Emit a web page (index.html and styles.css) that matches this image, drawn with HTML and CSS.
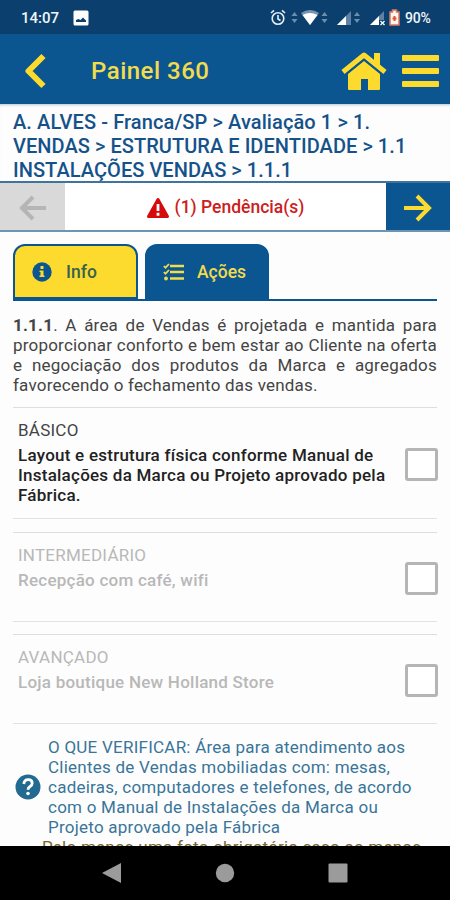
FILE: index.html
```html
<!DOCTYPE html>
<html lang="pt-BR">
<head>
<meta charset="utf-8">
<title>Painel 360</title>
<link rel="stylesheet" href="styles.css">
</head>
<body>
<div class="screen">
  <div class="status">
    <span class="clock">14:07</span>
    <svg class="photo" width="16" height="16" viewBox="0 0 16 16"><rect x=".5" y=".5" width="15" height="15" rx="1.5" fill="#fff"/><path d="M3 12v-2l2.500-1 2 1L10 7.500l3 3V12z" fill="#0b406e"/></svg>
    <svg class="signals" width="132" height="20" viewBox="0 0 132 20">
      <g fill="none" stroke="#e6eef5" stroke-width="1.600"><circle cx="8" cy="10.500" r="5.800"/><path d="M1 5l3-2.700M15 5l-3-2.700M8 7v4l2.500 1.500"/></g>
      <g fill="#6d8fae"><path d="M21.500 8l3-4 3 4zM21.500 11l3 4 3-4zM51.500 8l3-4 3 4zM51.500 11l3 4 3-4zM84 8l3-4 3 4zM84 11l3 4 3-4z"/></g>
      <path d="M31 5q9-6 18 0l-9 12z" fill="#7896b1"/><path d="M32.500 7q7.500-4 15 0L40 17z" fill="#fff"/>
      <path d="M67 17L81 3v14z" fill="#5d82a4"/><path d="M67 17l9-9v9z" fill="#fff"/>
      <path d="M100 17l14-14v9h-5v5z" fill="#5d82a4"/><path d="M100 17l9-9v9z" fill="#fff"/><path d="M110.500 13l4 4m0-4l-4 4" stroke="#fff" stroke-width="1.300"/>
      <path d="M120 4h2.500V2h4v2h2.500v13h-9z" fill="#fff4ee" stroke="#d57962" stroke-width="1.500"/><path d="M124.500 8v5M122.500 10.500h4" stroke="#e55335" stroke-width="2"/>
    </svg>
    <span class="battery">90%</span>
  </div>
  <header class="bar">
    <svg class="back" width="24" height="38" viewBox="0 0 24 38"><path d="M20.500 4L5.500 19l15 15" fill="none" stroke="#fddb2e" stroke-width="6" stroke-linejoin="round"/></svg>
    <h1>Painel 360</h1>
    <svg class="home" width="46" height="38" viewBox="0 0 46 38"><path d="M2 20L23 3l21 17" fill="none" stroke="#fddb2e" stroke-width="5" stroke-linejoin="round"/><path d="M33 1h6v14l-6-5zM7 22L23 9l16 13v15q0 1-1 1H27V27h-7v11H8q-1 0-1-1z" fill="#fddb2e"/><path d="M5 22L23 7.500 41 22" fill="none" stroke="#0b5591" stroke-width="1.500"/></svg>
    <div class="menu"><i></i><i></i><i></i></div>
  </header>
  <div class="crumbs"><div class="first">A. ALVES - Franca/SP &gt; Avaliação 1 &gt; 1.</div><div>VENDAS &gt; ESTRUTURA E IDENTIDADE &gt; 1.1</div><div>INSTALAÇÕES VENDAS &gt; 1.1.1</div></div>
  <nav class="pager">
    <div class="prev"><svg width="28" height="26" viewBox="0 0 28 26"><path d="M27 13H3M14 2L3 13l11 11" fill="none" stroke="#b5b5b5" stroke-width="4"/></svg></div>
    <div class="alert"><svg width="24" height="22" viewBox="0 0 24 22"><path d="M12 2.500L21.500 19.500h-19z" fill="#d50a0a" stroke="#d50a0a" stroke-width="3" stroke-linejoin="round"/><path d="M12 7v7M12 15.800v3" stroke="#fff" stroke-width="2.800"/></svg><span>(1) Pendência(s)</span></div>
    <div class="next"><svg width="28" height="28" viewBox="0 0 28 28"><path d="M0 14h25M13 2l12 12-12 12" fill="none" stroke="#fddb2e" stroke-width="4"/></svg></div>
  </nav>
  <div class="tabs">
    <div class="tab info"><svg width="20" height="20" viewBox="0 0 20 20"><circle cx="10" cy="10" r="9.700" fill="#0b5591"/><path d="M8.500 4h3v3h-3zM7.500 8.500h4v5h1V15h-5v-1.500h1V10h-1z" fill="#fddb2e"/></svg><span>Info</span></div>
    <div class="tab acoes"><svg width="22" height="18" viewBox="0 0 22 18"><path d="M7 3h14M7 9h14M7 15.500h14" stroke="#f1dc4c" stroke-width="2.500"/><path d="M.8 3l1.700 1.700L6 1M.8 9l1.700 1.700L6 7" fill="none" stroke="#f1dc4c" stroke-width="1.700"/><circle cx="3" cy="15.500" r="1.900" fill="#f1dc4c"/></svg><span>Ações</span></div>
  </div>
  <main>
    <p class="question"><span><b>1.1.1</b>. A área de Vendas é projetada e mantida para</span> <span>proporcionar conforto e bem estar ao Cliente na oferta</span> <span>e negociação dos produtos da Marca e agregados</span> <span class="last">favorecendo o fechamento das vendas.</span></p>
    <section class="level basic"><div class="copy"><h2>BÁSICO</h2><p>Layout e estrutura física conforme Manual de Instalações da Marca ou Projeto aprovado pela Fábrica.</p></div><span class="check"></span></section>
    <section class="level mid off"><div class="copy"><h2>INTERMEDIÁRIO</h2><p>Recepção com café, wifi</p></div><span class="check"></span></section>
    <section class="level adv off"><div class="copy"><h2>AVANÇADO</h2><p>Loja boutique New Holland Store</p></div><span class="check"></span></section>
    <div class="help">
      <svg width="26" height="26" viewBox="0 0 26 26"><circle cx="13" cy="13" r="12.500" fill="#226a90"/><path d="M8.800 10q.4-4.300 4.400-4.300 4 0 4 3.500 0 2-2.200 3.300-2 1.200-2 3.200" fill="none" stroke="#fff" stroke-width="2.800"/><circle cx="13" cy="19.500" r="1.800" fill="#fff"/></svg>
      <p>O QUE VERIFICAR: Área para atendimento aos Clientes de Vendas mobiliadas com: mesas, cadeiras, computadores e telefones, de acordo com o Manual de Instalações da Marca ou Projeto aprovado pela Fábrica</p>
    </div>
    <p class="photo-note">Pelo menos uma foto obrigatória caso ao menos</p>
  </main>
  <footer class="sysnav">
    <svg width="20" height="22" viewBox="0 0 20 22"><path d="M0 11L19 1v20z" fill="#9b9b9b"/></svg>
    <svg width="20" height="20" viewBox="0 0 20 20"><circle cx="10" cy="10" r="9.200" fill="#9b9b9b"/></svg>
    <svg width="20" height="20" viewBox="0 0 20 20"><rect x=".5" y=".5" width="19" height="19" rx="1" fill="#9b9b9b"/></svg>
  </footer>
</div>
</body>
</html>
```
FILE: styles.css
```css
* { box-sizing: border-box; margin: 0; padding: 0; }
body { font-family: Roboto, sans-serif; background: #fdfdfd; }
svg { display: block; flex: none; }
.screen { width: 450px; height: 900px; display: flex; flex-direction: column; overflow: hidden; }
.status { height: 34px; flex: none; background: #0b406e; color: #f2f6fa; display: flex; align-items: center; padding: 2px 0 0 21px; font-weight: 500; }
.clock { width: 52px; font-size: 15px; }
.signals { margin-left: 181px; }
.battery { margin-left: 3px; font-size: 14px; letter-spacing: -.2px; }
.bar { height: 70px; flex: none; background: #0b5591; display: flex; align-items: center; padding: 3px 11px 0 23px; }
.bar h1 { font-size: 24px; font-weight: 500; color: #f1dc4c; margin-left: 44px; flex: 1; letter-spacing: .5px; }
.home { margin-right: 15px; }
.menu { width: 37px; display: flex; flex-direction: column; gap: 7px; }
.menu i { height: 6px; border-radius: 1px; background: #fddb2e; }
.crumbs { height: 77px; flex: none; padding: 6px 13px 0; font-size: 20px; line-height: 24px; font-weight: 500; color: #15528a; letter-spacing: .05px; white-space: nowrap; box-shadow: inset 0 3px 3px -2px #b8c4ce; }
.crumbs .first { letter-spacing: .1px; }
.pager { height: 51px; flex: none; display: flex; border-top: 2px solid #3f749f; border-bottom: 2px solid #6e94b3; }
.prev, .next, .alert { display: flex; align-items: center; justify-content: center; }
.prev { width: 65px; background: #d9d9d9; padding-top: 2px; }
.alert { flex: 1; color: #cc2020; font-size: 17.500px; font-weight: 500; gap: 5px; background: #fff; padding-right: 1px; }
.alert svg { margin-top: 3px; }
.next { width: 64px; background: #0b5591; padding-top: 2px; }
.tabs { margin: 12px 13px 0; height: 57px; flex: none; display: flex; gap: 7px; border-bottom: 2px solid #0b5591; }
.tab { width: 125px; border: 2px solid #0b5591; border-radius: 12px 12px 0 0; display: flex; align-items: center; font-size: 17.500px; font-weight: 500; }
.info { background: #fddb2e; color: #34634f; padding-left: 17px; gap: 14px; }
.acoes { width: 124px; background: #0b5591; color: #f1dc4c; padding-left: 16px; gap: 12px; }
main { flex: 1; min-height: 0; overflow: hidden; padding: 14px 13px 0; font-size: 17px; line-height: 20px; }
.question { color: #444; letter-spacing: .2px; height: 92px; }
.question span { display: block; text-align-last: justify; word-spacing: -1px; white-space: normal; }
.question .last { text-align-last: left; word-spacing: 0; }
.question b { font-weight: 700; }
.level { display: flex; align-items: center; justify-content: space-between; border-top: 1px solid #ddd; border-bottom: 1px solid #e2e2e2; padding: 0 0 0 5px; letter-spacing: .24px; }
.level h2 { font-size: 17px; line-height: 20px; font-weight: 400; color: #444; margin-bottom: 5px; }
.level p { font-weight: 500; color: #222; width: 380px; }
.level .copy { align-self: flex-start; padding-top: 12px; }
.off h2, .off p { color: #b8b8b8; }
.check { width: 33px; height: 33px; flex: none; border: 3px solid #b5b5b5; border-radius: 3px; background: #fff; margin: 3px -1px 0 0; }
.basic { height: 112px; margin-bottom: 13px; }
.mid { height: 90px; margin-bottom: 12px; }
.adv { height: 90px; }
.help { display: flex; align-items: center; gap: 7px; color: #397599; padding: 13px 0 0 2px; letter-spacing: .24px; }
.help p { width: 376px; }
.photo-note { color: #77662f; padding-left: 29px; letter-spacing: .24px; white-space: nowrap; }
.sysnav { height: 54px; flex: none; background: #000; display: flex; align-items: center; justify-content: center; gap: 93px; }
```
